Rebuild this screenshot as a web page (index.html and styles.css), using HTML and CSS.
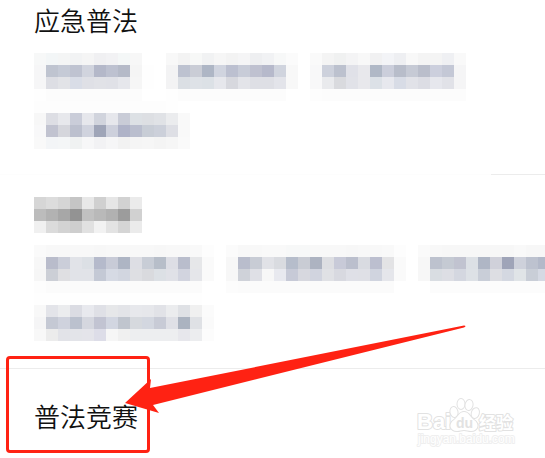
FILE: index.html
```
<!DOCTYPE html>
<html lang="zh-CN">
<head>
    <meta charset="UTF-8">
    <meta name="viewport" content="width=device-width, initial-scale=1.0">
    <title>应急普法</title>
    <link rel="stylesheet" href="styles.css">
</head>
<body>
    <main>
        <section class="topic fade">
            <h2>应急普法</h2>
            <div class="row">
                <div class="mosaic" data-name="a1"></div>
                <div class="mosaic" data-name="a2"></div>
                <div class="mosaic" data-name="a3"></div>
            </div>
            <div class="row">
                <div class="mosaic" data-name="a4"></div>
            </div>
        </section>

        <section class="topic hidden-title">
            <div class="mosaic" data-name="title"></div>
            <div class="row">
                <div class="mosaic" data-name="b1"></div>
                <div class="mosaic" data-name="b2"></div>
                <div class="mosaic" data-name="b3"></div>
            </div>
            <div class="row">
                <div class="mosaic" data-name="b4"></div>
            </div>
        </section>

        <section class="topic last">
            <h2>普法竞赛</h2>
        </section>
    </main>

    <div class="highlight"></div>
    <svg class="arrow" width="347" height="92" viewBox="0 0 347 92" aria-hidden="true">
        <path d="M5 80L31 56L30 65L344 2.5Q347 3 344 4.5L33 82L39 90Z" fill="#ff2213"/>
    </svg>

    <svg class="watermark" width="104" height="54" viewBox="0 0 104 54" role="img" aria-label="Baidu 经验">
        <text class="brand" x="4" y="33">Bai</text>
        <g class="paw">
            <ellipse cx="41" cy="16" rx="3.5" ry="5" transform="rotate(-12 41 16)"/>
            <ellipse cx="48" cy="8" rx="3.5" ry="5"/>
            <ellipse cx="56" cy="9" rx="3.5" ry="5" transform="rotate(12 56 9)"/>
            <ellipse cx="62" cy="17" rx="3.5" ry="5" transform="rotate(18 62 18)"/>
            <path d="M51 16c-5 0-6 5-10 8c-6 4-4 11 3 11c3 0 4-1 7-1s4 1 7 1c7 0 9-7 3-11c-4-3-5-8-10-8z"/>
        </g>
        <text class="du" x="43" y="32">du</text>
        <text class="brand cn" x="66" y="33">经验</text>
        <text class="site" x="5" y="47">jingyan.baidu.com</text>
    </svg>

    <script src="mosaic.js"></script>
</body>
</html>
```

FILE: styles.css
```
body {
    font-family: "Noto Sans CJK SC", "Noto Sans", sans-serif;
    margin: 0;
    background-color: #fff;
    color: #111;
    position: relative;
    overflow-x: hidden;
}

.topic {
    padding: 2px 0 24px 34px;
    border-bottom: 1px solid #ececec;
    overflow: hidden;
}

h2 {
    margin: 0 0 15px;
    font-size: 26px;
    line-height: 36px;
    font-weight: 350;
}

.fade {
    padding-bottom: 25px;
    border-image: linear-gradient(to right, #fdfdfd 90%, #ececec 90%) 1;
}

.hidden-title {
    padding-top: 22px;
    padding-bottom: 27px;
}

.hidden-title > .mosaic {
    margin-bottom: 12px;
}

.last {
    padding: 29px 0 8px 34px;
    border-bottom: none;
}

.row {
    display: flex;
    gap: 12px;
}

.mosaic {
    display: grid;
    grid-auto-rows: 12px;
    justify-content: start;
    flex-shrink: 0;
}

.highlight {
    position: absolute;
    left: 6px;
    top: 356px;
    width: 138px;
    height: 91px;
    border: 3px solid #ff2213;
    border-radius: 4px;
}

.arrow {
    position: absolute;
    left: 120px;
    top: 323px;
}

.watermark {
    position: absolute;
    right: 28px;
    top: 396px;
    font-family: "Liberation Sans", Arial, sans-serif;
}

.watermark text,
.paw {
    fill: #fff;
    stroke: #e2e2e2;
    stroke-width: 2px;
    stroke-linejoin: round;
    paint-order: stroke;
}

.brand {
    font-size: 22px;
    font-weight: bold;
}

.watermark .cn {
    font-family: "Noto Sans CJK SC", sans-serif;
    font-size: 17px;
}

.watermark .du {
    font-size: 14px;
    font-weight: bold;
    fill: #e2e2e2;
    stroke: none;
}

.watermark .site {
    font-size: 12px;
    stroke: #efefef;
}
```

FILE: mosaic.js
```
// Colours of the censored labels, one line per row of cells
const mosaics = {
    a1: [
        'f7f8f8 f3f6f7 f4f5f5 f2f3f4 f5f5f5 f0f0f2 f2f2f4 f4f7f7 f7f7f7 ffffff',
        'f6f6f7 bfc4d0 c5cad6 bfc3d1 d1d4de b4b8c9 bdc1d0 b5bac8 f5f5f5 fefefe',
        'f6f6f7 dddee4 e2e3e7 d9dde7 dfe0e6 e1e2e7 e0e1e7 e6e7ec f6f6f6 fefefe',
        'fefefe fcfcfc fcfcfc fcfcfc fcfcfc fcfcfc fcfcfc fcfcfc fcfcfc ffffff'
    ],
    a2: [
        'f8f8f8 f3f3f3 f7f8f7 f1f2f3 f6f6f6 f3f3f3 f5f5f6 eeeff1 f1f2f4 f7f8f8 fbfbfb',
        'f3f3f4 bdc2d0 cacdd6 aeb6c5 d0d4df bcc0d0 c8ccd8 bfc1d0 b6b9cb d0d4de f8f8f8',
        'f3f3f4 dbdfe4 dee2e7 dce1e6 e6e7ec d7d8de e3e4e9 dedfe5 dedfe5 e3e4ea f8f8f8',
        'fefefe fcfcfc fcfcfc fcfcfc fcfcfc fcfcfc fcfcfc fcfcfc fcfcfc fcfcfc ffffff'
    ],
    a3: [
        'fafafa f4f4f4 f0f1f1 f4f4f5 f8f8f8 f1f1f2 f3f4f7 eeeff2 f8f8f8 f4f4f4 f4f4f4 eff0f3 f9f9f9',
        'f8f8f9 cdd1dc bcc1ce e0e1e8 e8e8ec b0b8c6 cbcedb b8bdca c6cad5 babecb cccfdd c4c8d6 f5f5f6',
        'f8f8f9 e9eaed d9dade e1e2e8 e8e8ec dce1e7 e7e8ee d8dce6 e1e2e8 dcdde4 e6e7ed e1e2e8 f5f5f6',
        'fdfdfd fcfcfc fcfcfc fcfcfc fcfcfc fcfcfc fcfcfc fcfcfc fcfcfc fcfcfc fcfcfc fcfcfc fcfcfc'
    ],
    a4: [
        'fdfdfd fdfdfd fdfdfd fdfdfd fdfdfd fdfdfd fdfdfd fdfdfd fdfdfd fdfdfd fdfdfd fefefe ffffff',
        'f7f7f7 dddee4 e7e8ec cacdd9 e6e7ec d1d4dd e6e7ec c9ccd7 dde1e5 dddfe3 e0e2e6 ebecee f9f9f9',
        'f8f8f9 c1c3d0 d5d6dc bcc0ce d0d3de 9fa5b8 cdd0dc afb3c8 babece c8cdd6 ccd0da dedfe5 f9f9f9',
        'f9f9f9 f3f5f7 f4f6f7 f0f2f2 f7f7f8 f2f2f4 f6f6f7 f2f2f2 f5f5f5 f6f6f6 f4f4f4 f6f6f6 fafafa'
    ],
    title: [
        'd6d6d6 dcdcdc d5d5d5 c5c5c5 e8e8e8 d0d0d0 e6e6e6 d2d2d2 ebebeb',
        'bcbcbc b2b2b2 a7a7a7 939393 c1c1c1 b9b9b9 b1b1b1 9c9c9c d1d1d1',
        'f0f0f0 dbdbdb d3d3d3 cecece e1e1e1 f2f2f2 e3e3e3 d5d5d5 ebebeb'
    ],
    b1: [
        'fafafa f8f8f8 f8f8f8 f8f8f8 f8f8f8 f7f7f7 f8f8f8 f8f8f8 f8f8f8 f8f8f8 f7f7f7 f8f8f8 f8f8f8 f9f9f9 fdfdfd',
        'f7f7f7 b9bccb cbced9 e1e3e8 dce0e5 b5bacb c8cbd7 aeb5c4 dddee4 c8cdd6 b7bec9 dddee5 b9bdcc e6e7e9 fafafa',
        'f6f6f6 cccfd6 dfdfe2 e1e3e8 e1e3e8 c4c9d5 d6dae4 d2d6e0 dedfe3 d9dade dce0e5 e0e1e7 d2d4df e5e6ea fafafa',
        'fdfdfd fbfbfb fbfbfb fbfbfb fbfbfb fbfbfb fbfbfb fbfbfb fbfbfb fbfbfb fbfbfb fbfbfb fbfbfb fbfbfb ffffff'
    ],
    b2: [
        'fbfbfb f8f8f8 f8f8f8 f9f9f9 f9f9f9 f7f8f8 f7f8f8 f8f8f8 f8f8f8 f8f8f8 f7f7f7 f8f8f8 f8f8f8 f9f9f9 fdfdfd',
        'f7f7f7 b9bdcc c8ccd5 e1e2e7 d9dbe0 b6bdcb c9ccd4 adb3c1 dddee2 c8cad8 bbbfcd d9dbe1 bcbfcf e3e3e5 fafafa',
        'f7f7f7 cfd2d9 dfe0e6 f7f7f7 e8e9ef c7cad7 d7d8df d1d4df e0e1e5 d8d9e0 dfe0e7 dfe0e6 d0d4df e5e6eb fafafa',
        'fcfcfc fbfbfb fbfbfb fbfbfb fbfbfb fbfbfb fbfbfb fbfbfb fbfbfb fbfbfb fbfbfb fbfbfb fbfbfb fbfbfb ffffff'
    ],
    b3: [
        'fafafa f8f8f8 f7f7f7 f7f7f7 f7f7f7 f7f7f7 f7f7f7 f7f7f7 f9f9f9 f7f7f7 f7f7f7',
        'f7f7f7 bdc2ce c5cad3 c1c3d0 dce0e5 afb6c5 d0d1da 9fa4b8 ced1db bdc2cf b3b9c9',
        'f7f7f7 d9dde2 dddee4 d4d7e0 dde1e6 c9ced8 dddee3 d4d8e1 e0e4e7 c9ced7 d5d9e3',
        'ffffff fcfcfc fcfcfc fcfcfc fcfcfc fcfcfc fcfcfc fcfcfc fcfcfc fcfcfc fcfcfc'
    ],
    b4: [
        'fefefe fefefe fefefe fefefe fefefe fefefe fefefe fefefe fefefe fefefe fefefe fefefe fefefe fefefe ffffff',
        'f8f8f8 e3e4e9 ebecee dbdce3 e8e9ee dfe0e6 e6e7e9 e3e4e8 e7e8ec e6e7eb e1e2e7 ebecee dfe1e5 f0f0f0 fbfbfb',
        'f5f5f6 c5c9d4 cfd2dd bbc1ce d5d7df c2c4d2 d2d6e1 c0c5ce d6d9de d3d7e0 c8cbd6 dfe0e6 abb3c0 dfe1e5 fafafa',
        'f8f8f8 ececec e2e3e8 e3e4e9 e4e4ea dddde8 f6f6f6 f0f0f0 edeef0 edeef0 edeef0 edeef0 e7e7ec ecedef fcfcfc'
    ]
};

document.querySelectorAll('.mosaic').forEach(box => {
    const rows = mosaics[box.dataset.name].map(row => row.split(' '));
    box.style.gridTemplateColumns = `repeat(${rows[0].length}, 12px)`;
    rows.flat().forEach(colour => {
        const cell = document.createElement('span');
        cell.style.backgroundColor = `#${colour}`;
        box.appendChild(cell);
    });
});
```
